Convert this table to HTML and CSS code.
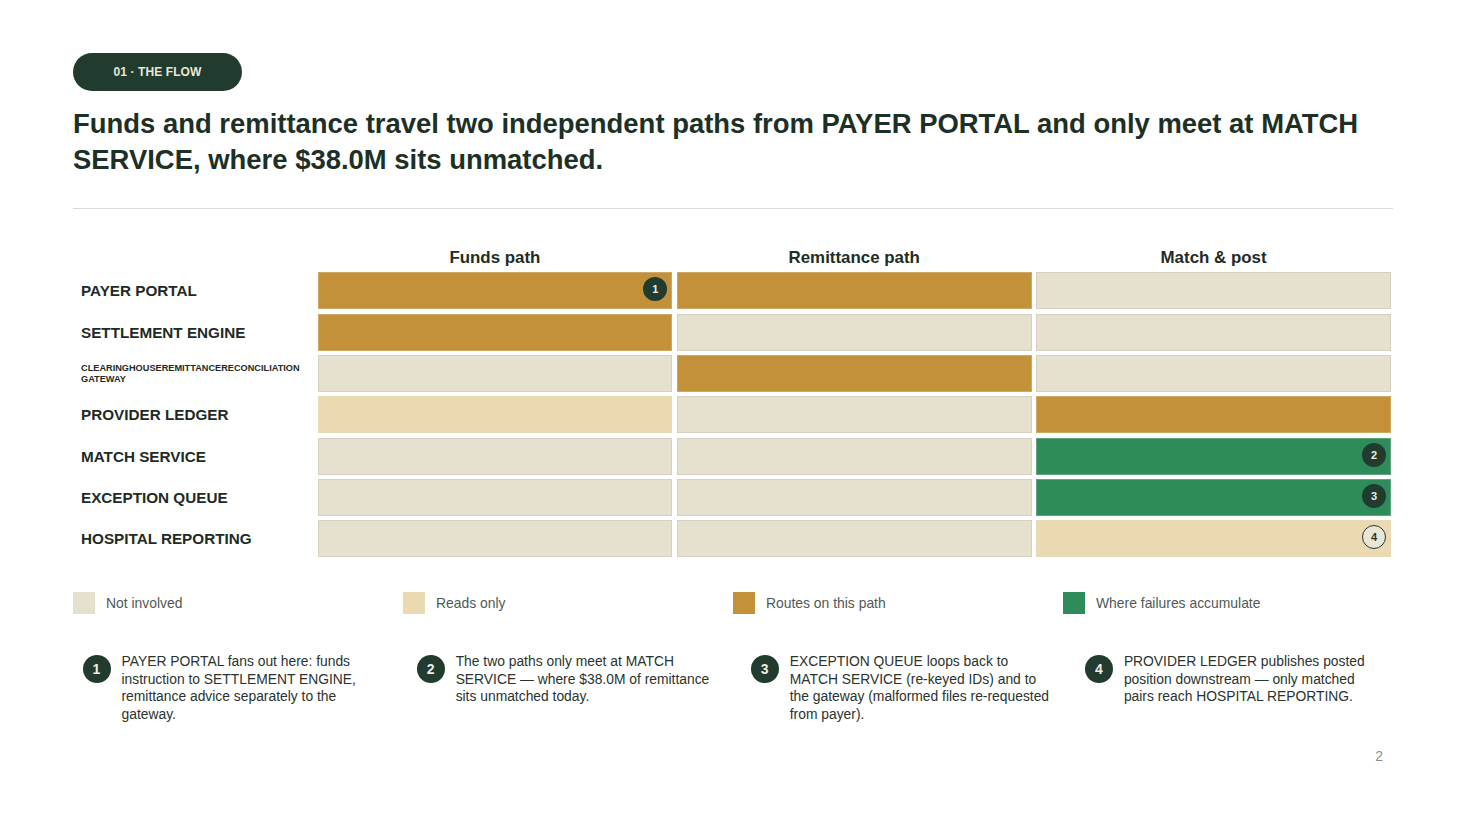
FILE: index.html
```html
<!DOCTYPE html>
<html>
<head>
<meta charset="utf-8">
<link rel="stylesheet" href="styles.css">
</head>
<body>
<div class="slide">
  <div class="pill">01 · THE FLOW</div>
  <h1 class="title">Funds and remittance travel two independent paths from PAYER PORTAL and only meet at MATCH SERVICE, where $38.0M sits unmatched.</h1>
  <div class="divider"></div>

  <div class="matrix">
    <div class="corner"></div>
    <div class="colhead">Funds path</div>
    <div class="colhead">Remittance path</div>
    <div class="colhead">Match &amp; post</div>

    <div class="label">PAYER PORTAL</div>
    <div class="cell route"><span class="badge">1</span></div>
    <div class="cell route"></div>
    <div class="cell none"></div>

    <div class="label">SETTLEMENT ENGINE</div>
    <div class="cell route"></div>
    <div class="cell none"></div>
    <div class="cell none"></div>

    <div class="label small">CLEARINGHOUSEREMITTANCERECONCILIATION GATEWAY</div>
    <div class="cell none"></div>
    <div class="cell route"></div>
    <div class="cell none"></div>

    <div class="label">PROVIDER LEDGER</div>
    <div class="cell read"></div>
    <div class="cell none"></div>
    <div class="cell route"></div>

    <div class="label">MATCH SERVICE</div>
    <div class="cell none"></div>
    <div class="cell none"></div>
    <div class="cell fail"><span class="badge">2</span></div>

    <div class="label">EXCEPTION QUEUE</div>
    <div class="cell none"></div>
    <div class="cell none"></div>
    <div class="cell fail"><span class="badge">3</span></div>

    <div class="label">HOSPITAL REPORTING</div>
    <div class="cell none"></div>
    <div class="cell none"></div>
    <div class="cell read"><span class="badge outline">4</span></div>
  </div>

  <div class="legend">
    <div class="legend-item"><span class="swatch none"></span>Not involved</div>
    <div class="legend-item"><span class="swatch read"></span>Reads only</div>
    <div class="legend-item"><span class="swatch route"></span>Routes on this path</div>
    <div class="legend-item"><span class="swatch fail"></span>Where failures accumulate</div>
  </div>

  <div class="notes">
    <div class="note"><span class="num">1</span><p>PAYER PORTAL fans out here: funds instruction to SETTLEMENT ENGINE, remittance advice separately to the gateway.</p></div>
    <div class="note"><span class="num">2</span><p>The two paths only meet at MATCH SERVICE — where $38.0M of remittance sits unmatched today.</p></div>
    <div class="note"><span class="num">3</span><p>EXCEPTION QUEUE loops back to MATCH SERVICE (re-keyed IDs) and to the gateway (malformed files re-requested from payer).</p></div>
    <div class="note"><span class="num">4</span><p>PROVIDER LEDGER publishes posted position downstream — only matched pairs reach HOSPITAL REPORTING.</p></div>
  </div>

  <div class="pagenum">2</div>
</div>
</body>
</html>
```

FILE: styles.css
```css
* { box-sizing: border-box; }
html, body { margin: 0; padding: 0; background: #ffffff; }
body {
  font-family: "Liberation Sans", Arial, sans-serif;
  color: #1f3329;
  width: 1467px;
  height: 825px;
  overflow: hidden;
}
.slide {
  padding: 53px 74px 0 73px;
  display: flex;
  flex-direction: column;
  align-items: flex-start;
}
.pill {
  width: 169px;
  height: 38px;
  border-radius: 19px;
  background: #213b2f;
  color: #eae6da;
  font-size: 12px;
  font-weight: bold;
  display: flex;
  align-items: center;
  justify-content: center;
  letter-spacing: 0.1px;
}
.title {
  margin: 15px 0 0 0;
  font-size: 27.45px;
  line-height: 36px;
  font-weight: bold;
  color: #1d3026;
  letter-spacing: 0;
}
.divider {
  align-self: stretch;
  height: 1px;
  background: #dcdad2;
  margin-top: 30px;
}
.matrix {
  align-self: stretch;
  margin-top: 37px;
  margin-right: 2px;
  display: grid;
  grid-template-columns: 240px repeat(3, 1fr);
  grid-template-rows: 22px repeat(7, 37px);
  column-gap: 4.5px;
  row-gap: 4.33px;
}
.colhead {
  font-size: 16.9px;
  font-weight: bold;
  text-align: center;
  color: #1f2d26;
  align-self: start;
  line-height: 19px;
  padding-top: 2px;
}
.label {
  font-size: 15.25px;
  font-weight: bold;
  color: #1d2b24;
  padding-left: 8px;
  display: flex;
  align-items: center;
}
.label.small {
  font-size: 9.2px;
  line-height: 11px;
  padding-top: 1px;
}
.cell {
  border: 1px solid #d6cfbd;
  display: flex;
  align-items: center;
  justify-content: flex-end;
  padding-right: 4px;
}
.none { background: #e6e0cf; border-color: #d7d0be; }
.read { background: #ebd9b1; border-color: #eadbb8; }
.route { background: #c3913a; border-color: #d0a865; }
.fail { background: #2d8c59; border-color: #5fa47d; }
.badge {
  width: 24px;
  height: 24px;
  border-radius: 50%;
  background: #213b2f;
  color: #efece2;
  font-size: 11px;
  font-weight: bold;
  display: flex;
  align-items: center;
  justify-content: center;
  margin-bottom: 3px;
}
.badge.outline {
  background: #ebe5d6;
  color: #213b2f;
  border: 1px solid #213b2f;
}
.legend {
  align-self: stretch;
  margin-top: 35px;
  display: grid;
  grid-template-columns: repeat(4, 330px);
}
.legend-item {
  display: flex;
  align-items: center;
  font-size: 13.9px;
  color: #4f5a54;
  height: 22px;
}
.swatch {
  width: 22px;
  height: 22px;
  margin-right: 11px;
  border: 1px solid transparent;
}
.notes {
  align-self: stretch;
  margin-top: 39px;
  padding-left: 9.5px;
  display: grid;
  grid-template-columns: repeat(4, 1fr);
  column-gap: 26px;
}
.note {
  display: flex;
  align-items: flex-start;
}
.num {
  flex: none;
  width: 28px;
  height: 28px;
  border-radius: 50%;
  background: #213b2f;
  color: #efece2;
  font-size: 14px;
  font-weight: bold;
  display: flex;
  align-items: center;
  justify-content: center;
  margin-top: 2px;
  margin-right: 11px;
}
.note p {
  margin: 0;
  font-size: 13.85px;
  line-height: 17.5px;
  color: #2a332e;
  max-width: 262px;
}
.pagenum {
  align-self: flex-end;
  margin-top: 25px;
  margin-right: 10px;
  font-size: 14px;
  color: #8a8f8b;
}
```
